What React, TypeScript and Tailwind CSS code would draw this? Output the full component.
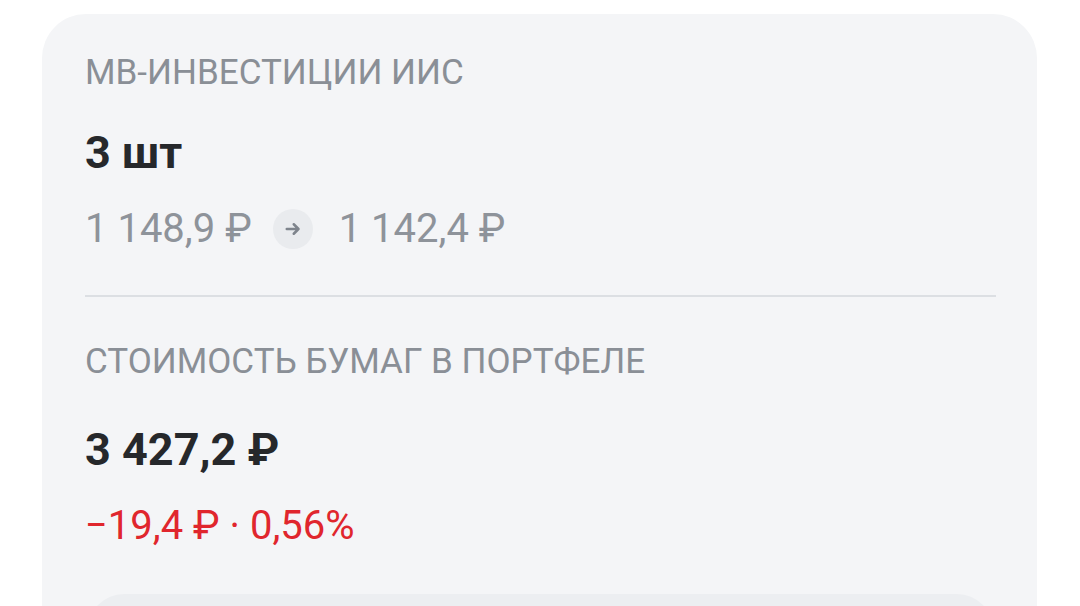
const Ruble = () => <span>₽</span>;

const ArrowBadge = () => (
  <span className="ml-[21px] mr-[26px] inline-flex h-[40px] w-[40px] items-center justify-center rounded-full bg-[#e9ebee]">
    <svg width="20" height="20" viewBox="0 0 16 16" fill="none">
      <path
        d="M3 8h9.4M8.6 4.2 12.4 8l-3.8 3.8"
        stroke="#7e848c"
        strokeWidth="2"
        strokeLinecap="round"
        strokeLinejoin="round"
      />
    </svg>
  </span>
);

const App = () => {
  return (
    <main
      className="h-[606px] w-[1080px] overflow-hidden bg-white pt-[14px] pl-[42px]"
      style={{ fontFamily: "Roboto, 'Noto Sans', sans-serif" }}
    >
      <div className="h-[640px] w-[995px] rounded-[44px] bg-[#f4f5f7] px-[43px] pt-[39px]">
        <div className="text-[35px] leading-[40px] text-[#8a8f96]">
          МВ-ИНВЕСТИЦИИ ИИС
        </div>
        <div className="mt-[36px] text-[45px] font-bold leading-[48px] text-[#26282b]">
          3 шт
        </div>
        <div className="mt-[28px] flex items-center text-[40px] leading-[48px] text-[#8e939a]">
          <span>
            1 148,9 <Ruble />
          </span>
          <ArrowBadge />
          <span>
            1 142,4 <Ruble />
          </span>
        </div>
        <div className="mt-[42px] h-[2px] w-[911px] bg-[#dcdfe3]" />
        <div className="mt-[45px] text-[35px] leading-[40px] text-[#8a8f96]">
          СТОИМОСТЬ БУМАГ В ПОРТФЕЛЕ
        </div>
        <div className="mt-[44px] text-[45px] font-bold leading-[48px] text-[#26282b]">
          3 427,2 <Ruble />
        </div>
        <div className="mt-[28px] text-[40px] leading-[48px] text-[#e0262d]">
          −19,4 <Ruble /> · 0,56%
        </div>
        <div className="mt-[44px] ml-[3px] h-[80px] w-[905px] rounded-[36px] bg-[#eceef1]" />
      </div>
    </main>
  );
};

export default App;
